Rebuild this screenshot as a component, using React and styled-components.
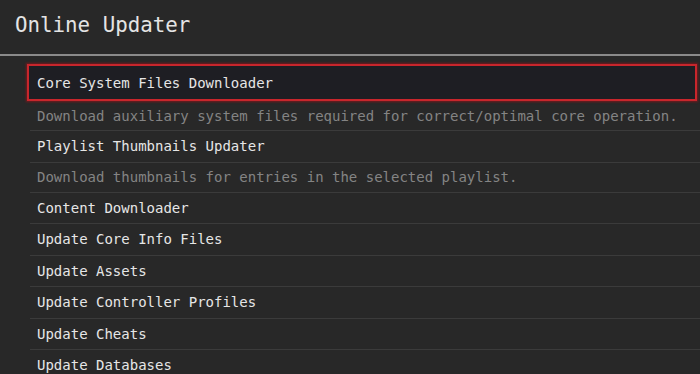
import React from "react";
import styled, { createGlobalStyle } from "styled-components";

const Global = createGlobalStyle`
  html, body { margin: 0; padding: 0; background: #282828; }
  body { font-family: "DejaVu Sans Mono", "Liberation Mono", monospace; overflow: hidden; }
`;

const Screen = styled.div`
  width: 700px;
  height: 374px;
  background: #282828;
  display: flex;
  flex-direction: column;
  overflow: hidden;
`;

const Header = styled.header`
  flex-shrink: 0;
  display: flex;
  align-items: center;
  box-sizing: border-box;
  height: 56px;
  padding-left: 15px;
  padding-bottom: 4px;
  border-bottom: 2px solid #8a8a8a;
`;

const Title = styled.h1`
  margin: 0;
  font-size: 20.8px;
  font-weight: normal;
  color: #e4e4e4;
`;

const List = styled.div`
  flex-shrink: 0;
  display: flex;
  flex-direction: column;
  margin-left: 30px;
  padding-top: 8px;
`;

const Item = styled.div`
  flex-shrink: 0;
  display: flex;
  align-items: center;
  box-sizing: border-box;
  height: ${(p) => (p.$selected ? "37px" : p.$desc ? "30px" : "31.5px")};
  padding-left: 7px;
  font-size: 14px;
  white-space: nowrap;
  color: ${(p) => (p.$desc ? "#848484" : "#e6e6e6")};
  border-bottom: 1px solid #3b3b3b;
  ${(p) =>
    p.$selected &&
    `
    margin-left: -3px;
    margin-right: 3px;
    border: 2px solid #c8262c;
    background: #1e1e23;
    box-shadow: 0 0 2px 1px rgba(150, 20, 25, 0.7);
    padding-left: 8px;
  `}
`;

const items = [
  { label: "Core System Files Downloader", selected: true },
  { label: "Download auxiliary system files required for correct/optimal core operation.", desc: true },
  { label: "Playlist Thumbnails Updater" },
  { label: "Download thumbnails for entries in the selected playlist.", desc: true },
  { label: "Content Downloader" },
  { label: "Update Core Info Files" },
  { label: "Update Assets" },
  { label: "Update Controller Profiles" },
  { label: "Update Cheats" },
  { label: "Update Databases" },
];

export default function App() {
  return (
    <>
      <Global />
      <Screen>
        <Header>
          <Title>Online Updater</Title>
        </Header>
        <List>
          {items.map((it, i) => (
            <Item key={i} $selected={it.selected} $desc={it.desc}>
              {it.label}
            </Item>
          ))}
        </List>
      </Screen>
    </>
  );
}
